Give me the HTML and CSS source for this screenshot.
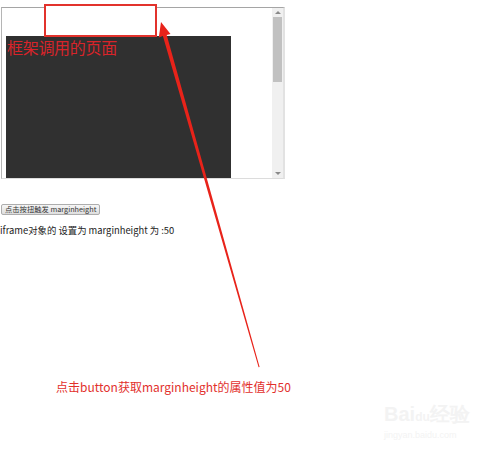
FILE: index.html
```html
<!DOCTYPE html>
<html>
<head>
<meta charset="utf-8">
<link rel="stylesheet" href="styles.css">
</head>
<body>
<div class="frame">
  <div class="frame-view">
    <div class="inner-page"><p class="inner-title">框架调用的页面</p></div>
  </div>
  <div class="scrollbar">
    <span class="arrow up"></span>
    <div class="track"><div class="thumb"></div></div>
    <span class="arrow down"></span>
  </div>
</div>
<div class="controls">
  <button class="trigger">点击按扭触发 marginheight</button>
  <p class="result">iframe对象的 设置为 marginheight 为 :50</p>
</div>
<svg class="annot" width="500" height="457" viewBox="0 0 500 457">
  <rect x="45" y="5" width="111" height="31" fill="#fff" stroke="#e2322c" stroke-width="2"/>
  <polygon points="161,22 170.5,34 166.7,35 259.6,367 258.6,367.2 162.9,36 158.8,37.5" fill="#e8231a"/>
</svg>
<p class="caption">点击button获取marginheight的属性值为50</p>
<div class="watermark"><span class="wm-logo">Bai<span class="wm-paw">du</span>经验</span><span class="wm-url">jingyan.baidu.com</span></div>
</body>
</html>
```
FILE: styles.css
```css
html, body {
  margin: 0;
  padding: 0;
  background: #fff;
}
body {
  position: relative;
  width: 500px;
  height: 457px;
  overflow: hidden;
  font-family: "Noto Sans CJK SC", "Noto Sans", sans-serif;
}
.frame {
  display: flex;
  box-sizing: border-box;
  width: 284px;
  height: 172px;
  margin: 7px 0 0 1px;
  border-style: solid;
  border-width: 1px 2px 1px 1px;
  border-color: #a5a5a5 #e2e2e2 #dcdcdc #b5b5b5;
  background: #fff;
}
.frame-view {
  flex: 1;
  overflow: hidden;
  padding: 28px 0 0 4px;
}
.inner-page {
  width: 225px;
  height: 200px;
  background: #303030;
}
.inner-title {
  margin: 0;
  padding: 2px 0 0 1px;
  font-size: 16px;
  line-height: 19px;
  color: #d8242a;
  letter-spacing: -0.3px;
}
.scrollbar {
  width: 11px;
  display: flex;
  flex-direction: column;
  background: #f0f0f0;
}
.arrow {
  height: 9px;
  display: flex;
  justify-content: center;
  align-items: center;
}
.arrow::before {
  content: "";
  border-left: 3px solid transparent;
  border-right: 3px solid transparent;
}
.arrow.up::before {
  border-bottom: 3px solid #8a8a8a;
}
.arrow.down::before {
  border-top: 3px solid #8a8a8a;
}
.track {
  flex: 1;
  padding: 0 1px;
}
.thumb {
  height: 65px;
  background: #c1c1c1;
}
.controls {
  padding-top: 25px;
}
.trigger {
  display: block;
  margin: 0 0 0 1px;
  height: 11px;
  padding: 0 3px;
  font-family: "Noto Sans CJK SC", "Noto Sans", sans-serif;
  font-size: 7.3px;
  line-height: 9px;
  color: #333;
  background: linear-gradient(#f6f6f6, #dedede);
  border: 1px solid #adadad;
  border-radius: 2px;
}
.result {
  margin: 9px 0 0 0;
  font-size: 9.4px;
  line-height: 12px;
  color: #222;
}
.annot {
  position: absolute;
  left: 0;
  top: 0;
}
.caption {
  position: absolute;
  left: 56px;
  top: 379px;
  margin: 0;
  font-size: 12px;
  line-height: 16px;
  color: #e2302c;
}
.watermark {
  position: absolute;
  left: 384px;
  top: 403px;
  display: flex;
  flex-direction: column;
  color: #f3f3f3;
}
.wm-logo {
  font-family: "Liberation Sans", sans-serif;
  font-size: 20px;
  line-height: 22px;
  font-weight: bold;
}
.wm-paw {
  font-size: 12px;
}
.wm-url {
  font-family: "Liberation Sans", sans-serif;
  font-size: 9px;
  line-height: 14px;
}
```
